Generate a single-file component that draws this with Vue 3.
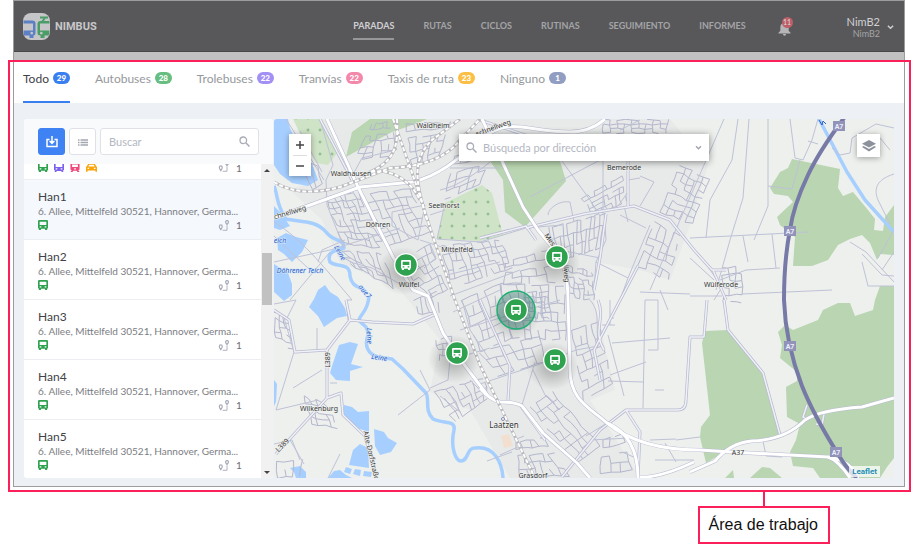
<script setup>
const nav = ['PARADAS', 'RUTAS', 'CICLOS', 'RUTINAS', 'SEGUIMIENTO', 'INFORMES']

const tabs = [
  { label: 'Todo', count: 29, tone: 'blue' },
  { label: 'Autobuses', count: 28, tone: 'green' },
  { label: 'Trolebuses', count: 22, tone: 'violet' },
  { label: 'Tranvías', count: 22, tone: 'pink' },
  { label: 'Taxis de ruta', count: 23, tone: 'amber' },
  { label: 'Ninguno', count: 1, tone: 'slate' },
]

const address = '6. Allee, Mittelfeld 30521, Hannover, Germa...'
const stops = [
  { id: 0, kinds: ['bus', 'trolley', 'tram', 'taxi'], routes: 1 },
  { id: 1, name: 'Han1', address, kinds: ['bus'], routes: 1, active: true },
  { id: 2, name: 'Han2', address, kinds: ['bus'], routes: 1 },
  { id: 3, name: 'Han3', address, kinds: ['bus'], routes: 1 },
  { id: 4, name: 'Han4', address, kinds: ['bus'], routes: 1 },
  { id: 5, name: 'Han5', address, kinds: ['bus'], routes: 1 },
]

const pins = [
  { x: 406, y: 265 },
  { x: 557, y: 257 },
  { x: 516, y: 310, selected: true },
  { x: 457, y: 353 },
  { x: 555, y: 360 },
]

// Street blocks: four corners of a district, then columns and rows.
const districts = [
  [325, 197, 358, 192, 385, 249, 343, 243, 7, 8],
  [363, 194, 410, 189, 430, 232, 388, 246, 6, 6],
  [372, 124, 390, 122, 398, 155, 354, 160, 5, 6],
  [406, 124, 450, 122, 438, 158, 412, 166, 5, 6],
  [455, 156, 492, 150, 480, 184, 444, 200, 5, 5],
  [441, 246, 500, 240, 512, 268, 452, 288, 10, 5],
  [398, 262, 430, 244, 447, 290, 430, 298, 5, 6],
  [337, 250, 382, 254, 394, 288, 350, 264, 7, 4],
  [462, 300, 500, 284, 512, 338, 480, 352, 5, 6],
  [500, 284, 564, 286, 566, 340, 512, 338, 8, 6],
  [480, 352, 540, 336, 544, 362, 498, 376, 6, 3],
  [548, 228, 605, 214, 600, 248, 556, 262, 12, 3],
  [506, 262, 548, 250, 556, 282, 504, 284, 6, 4],
  [568, 266, 592, 272, 594, 300, 570, 298, 5, 6],
  [582, 198, 622, 176, 626, 202, 594, 216, 7, 5],
  [603, 120, 668, 120, 666, 133, 603, 133, 9, 3],
  [680, 165, 709, 180, 692, 224, 660, 212, 5, 7],
  [654, 222, 680, 236, 668, 280, 638, 266, 4, 6],
  [572, 330, 598, 322, 612, 384, 584, 400, 4, 8],
  [434, 392, 484, 378, 488, 398, 455, 422, 8, 4],
  [436, 340, 452, 336, 452, 362, 440, 360, 3, 4],
  [530, 407, 552, 392, 600, 446, 577, 463, 4, 8],
  [516, 442, 544, 438, 570, 476, 520, 476, 6, 5],
  [603, 440, 622, 434, 632, 470, 600, 474, 3, 4],
  [304, 396, 326, 404, 338, 428, 312, 424, 4, 4],
  [274, 312, 288, 318, 294, 350, 276, 344, 3, 5],
  [722, 268, 742, 266, 742, 302, 724, 302, 3, 5],
  [414, 300, 436, 292, 440, 312, 418, 314, 4, 2],
  [276, 462, 302, 460, 300, 476, 278, 478, 3, 2],
  [297, 160, 318, 166, 322, 184, 312, 190, 2, 2],
  [524, 292, 548, 292, 550, 318, 526, 318, 6, 5],
]

function blockPath([ax, ay, bx, by, cx, cy, dx, dy, cols, rows], seed) {
  const at = (i, j) => {
    const u = i / cols
    const v = j / rows
    const sway = Math.sin(i * 2.1 + j * 1.7 + seed * 3) * 0.8
    const x = (ax * (1 - u) + bx * u) * (1 - v) + (dx * (1 - u) + cx * u) * v + sway
    const y = (ay * (1 - u) + by * u) * (1 - v) + (dy * (1 - u) + cy * u) * v - sway
    return x.toFixed(1) + ' ' + y.toFixed(1)
  }
  const dropped = (i, j, k) => (i * 7 + j * 13 + k * 5 + seed * 11 + i * j * 3) % 10 < 3
  let d = ''
  for (let i = 0; i <= cols; i++) {
    for (let j = 0; j <= rows; j++) {
      if (i < cols && !dropped(i, j, 0)) d += `M${at(i, j)}L${at(i + 1, j)}`
      if (j < rows && !dropped(i, j, 1)) d += `M${at(i, j)}L${at(i, j + 1)}`
    }
  }
  return d
}
const streets = districts.map(blockPath).join('')

const lanes = [
  'M320 119L333 165L326 180L327 205L344 248',
  'M274 222C300 238 320 262 352 300M274 262L330 250L400 228',
  'M290 300L330 252M274 236L310 270M318 262L322 250L345 240',
  'M350 262L372 268L400 284M352 300L346 300L348 320',
  'M274 304L296 300L286 320M284 318L294 352L276 410L318 400',
  'M317 328V350M293 388L322 370M330 383L337 383M398 415L430 390L420 370',
  'M449 392L460 412L440 396M430 388L448 380L450 360L490 348',
  'M290 440L304 464M328 478L340 454M300 460L292 440L274 444',
  'M437 239L480 242L526 228L562 225M445 203L437 239M420 240L445 248',
  'M447 275L500 262M450 296L520 270M453 312L500 290M460 330L560 300',
  'M480 384L540 364L576 350L598 346M535 362L522 405M533 370L545 395L560 410',
  'M548 215C548 208 560 200 570 202L574 222M530 197L566 178L600 160',
  'M562 161L590 200L600 216M603 161V212M628 161V192L618 206M640 176L654 182L640 206',
  'M628 180L640 178M604 213L606 240L596 262L594 290M596 262L628 278L650 225',
  'M624 206L628 222M620 215L646 228M628 278L620 300M560 250L600 258',
  'M590 300C600 312 596 320 598 346M608 335L624 396M612 343L670 338M608 381L644 382',
  'M645 300L643 408M645 300H658V350H648M655 390H664M610 375L646 362',
  'M610 300V325M610 318H614M602 325H615M640 292L690 294M660 290L668 310',
  'M724 119L680 220L650 290M738 119L732 160L710 200L706 238M749 119L743 198L730 240L716 290',
  'M768 119V206L754 240M768 186L792 189L800 160M790 119L795 158L803 160L812 140L818 119M808 141L818 144',
  'M690 238L770 234L808 232M743 236L748 262M772 234L776 268M720 280L746 270L780 268',
  'M690 258L714 280M690 296H722M742 294L832 290M706 264L720 284M714 300L724 284',
  'M894 174C875 180 874 190 878 200L890 224M832 148L840 155L850 153L852 138L876 124L894 128M880 138L890 150',
  'M862 254L882 275L894 276M850 242L866 252L894 282M882 270L894 252M862 262L868 286H894M894 230L878 258',
  'M676 440L700 437M650 440L676 439M665 443L676 462M655 460H694M763 441L766 456L782 457',
  'M622 452L636 458L640 478M590 440L630 438M586 436L612 420',
  'M500 455L520 446M487 461L512 452M514 440L524 436M620 130L640 120',
  'M480 140L498 150M300 131L322 172M286 119L324 180M450 168L500 168M350 180L362 158L396 150',
  'M440 190C460 186 480 170 490 162M430 215L445 210M392 212L425 205L418 240L392 226Z',
  'M430 244L436 258L424 268M462 300L470 330L490 360M470 380L486 396',
]

const minorRoads = [
  'M274 310L289 320L295 352L327 350L350 320L372 322L413 324L436 314',
  'M327 350V398L276 454M327 398L341 393L343 415L365 436L376 478',
  'M346 300L350 320M320 119L352 180',
  'M526 228L584 214L634 206L670 220L694 250L712 270L726 270M594 290L600 258L606 214M628 206V160',
  'M600 160L480 120M480 238L526 226L536 240',
  'M480 300L510 366L508 400M520 405L545 440',
  'M562 477L600 430L626 410L640 410L678 410Q686 410 686 400L690 337H704M626 410L640 432L638 477',
  'M707 300L704 337M724 300L728 330L763 373L780 435M713 270L726 300',
  'M598 300C606 320 592 330 604 350M638 266L594 350L600 380',
  'M807 405L803 417L808 420M824 414L822 425L816 424',
]

const roads = [
  'M274 218L360 187L413 182C440 175 457 160 487 135C510 118 530 132 570 132Q590 132 605 119',
  'M327 119L358 187L393 257L413 290L428 296L443 333L463 363L488 396M480 388Q490 400 500 402Q515 402 522 406L543 433L577 463L590 478',
  'M482 119L502 161L523 207L538 230L557 253Q568 270 568 300L570 370C570 400 590 408 607 423Q640 450 700 450L731 452L828 457Q850 460 858 478',
  'M690 472L715 461Q730 443 752 441Q785 440 805 420Q820 410 862 407L894 398',
  'M607 423Q638 436 638 478M640 477Q660 478 694 462M828 457Q838 460 850 478',
]

const rails = [
  'M393 119L417 187L433 237L455 300L480 365L535 478',
  'M274 182Q300 198 340 187L390 168Q440 166 460 140L480 119',
  'M397 119C398 140 398 160 370 172L382 171C405 175 415 190 420 200',
  'M427 220C415 180 412 160 432 140L460 119',
]

const river =
  'M274 186C278 195 276 205 286 219C300 222 316 220 326 232C333 242 344 238 344 248C336 250 326 252 330 262C338 268 350 262 350 276C352 288 360 286 366 292M369 296C368 312 360 314 359 320C362 326 368 324 368 335C364 346 368 354 378 357L392 359L403 369L426 393C430 400 424 410 433 419C444 424 456 420 454 430C450 448 456 461 461 461C469 461 466 447 476 448C494 446 502 462 503 478'

const lakes = [
  'M274 119H288L290 128L300 150L312 164L318 180L308 186L292 183L280 174L274 165Z',
  'M274 206L281 213L290 226L280 230L274 228Z',
  'M277 238L286 233L296 237L308 240L302 252L292 262L284 254L278 250Z',
  'M274 264L288 273L292 284L292 295L284 301L274 292Z',
  'M318 290L325 285L330 292L338 297L345 308L347 316L337 318L324 327L318 316L309 307L314 299Z',
  'M332 366L339 345L350 342L358 344L351 364L363 367L350 371L350 381L336 380L330 373Z',
  'M344 405L352 407L358 412L369 411V432L357 428L344 416Z',
  'M374 429L384 432L388 438L397 443L391 452L380 455L375 446Z',
  'M349 465L353 450L360 444L368 448L369 468Z',
  'M346 467L352 469L350 474L344 472ZM355 469L361 470L360 476L353 474ZM364 471L372 472L371 477L363 476Z',
  'M328 478L334 471L340 470L346 475L352 478Z',
  'M290 468L300 466L306 472V478H296L294 472Z',
  'M274 380L277 384L276 402L274 406Z',
]

const woods = [
  'M346 157L352 132L370 119H427L415 124L392 132L362 148Z',
  'M490 161L560 161L566 181L525 227L505 212L503 180Z',
  'M792 159L840 169L838 188L843 196L853 192L868 210L875 219L874 230L883 231L885 217L894 205V255L880 254L877 260L870 243L862 235L850 239L838 245L828 260L812 266L793 266L795 237L780 225L777 217L793 202L788 196L774 194L770 188L780 172L788 168Z',
  'M880 286H894V458L887 467L880 478H820L813 468L793 466L790 452L796 440L800 424L787 417L786 387L797 381V372L780 358L782 345L778 332L785 325L793 330L818 320L823 310L838 303L850 303L855 316L873 310L875 300Z',
  'M705 331L728 330L763 373L780 435L740 443L706 463L700 437L701 427L710 415L705 370L702 343Z',
  'M750 478L762 467L770 468L782 478ZM725 478L733 470L734 478Z',
]

const labels = [
  { t: 'Waldheim', x: 433, y: 128 },
  { t: 'Waldhausen', x: 351, y: 176 },
  { t: 'Seelhorst', x: 444, y: 208 },
  { t: 'Döhren', x: 378, y: 227 },
  { t: 'Mittelfeld', x: 457, y: 252 },
  { t: 'Wülfel', x: 409, y: 287 },
  { t: 'Bemerode', x: 624, y: 170 },
  { t: 'Wülferode', x: 721, y: 287 },
  { t: 'Wilkenburg', x: 319, y: 411 },
  { t: 'Grasdorf', x: 533, y: 478 },
  { t: 'A37', x: 738, y: 455 },
  { t: 'schnellweg', x: 289, y: 215, r: -17 },
  { t: 'schnellweg', x: 494, y: 130, r: -20 },
  { t: 'Mes', x: 548, y: 241, r: 55 },
  { t: 'llweg', x: 564, y: 274, r: 85 },
  { t: 'L389', x: 330, y: 360, r: -90 },
  { t: 'L389', x: 284, y: 447, r: -45 },
  { t: 'Alte Dorfstraße', x: 369, y: 456, r: 77 },
]

const waterLabels = [
  { t: 'Döhrener Teich', x: 300, y: 273 },
  { t: 'eich', x: 280, y: 243 },
  { t: 'Leine', x: 338, y: 254, r: 60 },
  { t: 'aue7', x: 363, y: 293, r: 50 },
  { t: 'Leine', x: 367, y: 336, r: 88 },
  { t: 'Leine', x: 379, y: 360, r: 8 },
]

const shields = [
  [839, 126],
  [790, 231],
  [790, 346],
  [836, 452],
]

const turn = (l) => `translate(${l.x} ${l.y}) rotate(${l.r || 0})`
</script>

<template>
  <div class="page">
    <svg class="sprite" aria-hidden="true">
      <symbol id="bus" viewBox="0 0 12 12">
        <path fill="currentColor" fill-rule="evenodd" d="M1.5 0h9Q12 0 12 1.500V9.500L11 10.500V12H8.500V10.500H3.500V12H1V10.500L0 9.500V1.500Q0 0 1.500 0ZM2 2V6H10V2ZM2 7.500V9H4V7.500ZM8 7.500V9H10V7.500Z" />
      </symbol>
      <symbol id="trolley" viewBox="0 0 12 12">
        <path fill="currentColor" fill-rule="evenodd" d="M1 0h10v1.500H12V9.500L10.500 10.500L11.500 12H9.500L8.500 10.800H3.500L2.500 12H.5L1.500 10.500L0 9.500V1.500H1ZM2 2.500V6H10V2.500ZM2 7.500V9H4V7.500ZM8 7.500V9H10V7.500Z" />
      </symbol>
      <symbol id="tram" viewBox="0 0 12 12">
        <path fill="currentColor" fill-rule="evenodd" d="M3 0H9L11.500 1.500V9L10 10L11.500 12H9L8 10.500H4L3 12H.5L2 10L.5 9V1.500ZM2.500 3V6H9.500V3ZM5 7.500V9H7V7.500Z" />
      </symbol>
      <symbol id="taxi" viewBox="0 0 14 12">
        <path fill="currentColor" fill-rule="evenodd" d="M5 0H9V1.500H11L13 5L14 6V12H12V10.500H2V12H0V6L1 5L3 1.500H5ZM4 3L3 5.500H11L10 3ZM2 7V8.500H4V7ZM10 7V8.500H12V7Z" />
      </symbol>
      <symbol id="chevron" viewBox="0 0 8 6">
        <path fill="none" stroke="currentColor" stroke-width="1.600" d="M1 1.500L4 4.500L7 1.500" />
      </symbol>
      <symbol id="lens" viewBox="0 0 12 12">
        <circle cx="4.700" cy="4.700" r="3.600" fill="none" stroke="currentColor" stroke-width="1.400" />
        <path stroke="currentColor" stroke-width="1.700" d="M7.400 7.400L11.400 11.400" />
      </symbol>
    </svg>

    <div class="stage">
      <div class="window">
        <header class="top">
          <div class="brand">
            <svg class="logo" viewBox="0 0 27 27" aria-hidden="true">
              <rect width="27" height="27" rx="8" fill="#c6c6c8" />
              <path fill="#5b80c4" fill-rule="evenodd" d="M0.500 7.500H9Q12.500 7.500 12.500 10V20Q12.500 22.500 10.500 22.500V25H6.500V22.500H1Q.5 21 .5 17.500H10V10.500H.5ZM8.700 18.700a1.400 1.400 0 1 0 .1 0Z" />
              <path fill="#4a9d66" fill-rule="evenodd" d="M17 3.500H25V5.500H22.500L21 8H26.500V10.500H17V17.500H26.500Q26.500 21 25.500 22.500H21.500V25H17.500V22.500Q14.500 22.500 14.500 20V11Q14.500 8 17.500 8H18.500L20.500 5.500H17ZM18.300 18.700a1.400 1.400 0 1 0 .1 0Z" />
            </svg>
            <span>NIMBUS</span>
          </div>
          <nav class="menu">
            <a v-for="(n, i) in nav" :key="n" href="#" :class="{ on: i === 0 }">{{ n }}</a>
          </nav>
          <button class="bell" aria-label="Notificaciones">
            <svg viewBox="0 0 14 16" aria-hidden="true">
              <path fill="currentColor" d="M7 0.500Q8 .5 8 1.800Q11.500 2.800 11.500 7V10.500L13.500 12.500V13.300H.5V12.500L2.500 10.500V7Q2.500 2.800 6 1.800Q6 .5 7 .5ZM5.200 14H8.800Q8.500 15.800 7 15.800T5.200 14Z" />
            </svg>
            <span class="alerts">11</span>
          </button>
          <button class="user">
            <span class="who"><b>NimB2</b><small>NimB2</small></span>
            <svg class="chev" aria-hidden="true"><use href="#chevron" /></svg>
          </button>
        </header>

        <div class="tabs" role="tablist">
          <button v-for="(t, i) in tabs" :key="t.label" role="tab" class="tab" :class="{ on: i === 0 }" :aria-selected="i === 0">
            {{ t.label }}<span class="badge" :class="t.tone">{{ t.count }}</span>
          </button>
        </div>

        <main class="work">
          <aside class="side">
            <div class="tools">
              <button class="tool primary" aria-label="Importar">
                <svg viewBox="0 0 12 12" aria-hidden="true">
                  <path fill="none" stroke="currentColor" stroke-width="1.500" d="M3.500 3.500H1V10.500H11V3.500H8.500M6 0V7M3.600 5L6 7.400L8.400 5" />
                </svg>
              </button>
              <button class="tool" aria-label="Lista">
                <svg viewBox="0 0 12 12" aria-hidden="true">
                  <path stroke="currentColor" stroke-width="1.400" d="M1 4H2.500M3.500 4H11M1 6.500H2.500M3.500 6.500H11M1 9H2.500M3.500 9H11" />
                </svg>
              </button>
              <label class="find">
                <input type="text" placeholder="Buscar" aria-label="Buscar" />
                <svg aria-hidden="true"><use href="#lens" /></svg>
              </label>
            </div>
            <div class="scroller">
              <ul class="list">
                <li v-for="s in stops" :key="s.id" class="stop" :class="{ active: s.active, cut: !s.name }">
                  <template v-if="s.name">
                    <h3>{{ s.name }}</h3>
                    <p>{{ s.address }}</p>
                  </template>
                  <div class="meta">
                    <svg v-for="k in s.kinds" :key="k" :class="['kind', k]" aria-hidden="true"><use :href="'#' + k" /></svg>
                    <svg class="route" viewBox="0 0 12 12" aria-hidden="true">
                      <g fill="none" stroke="currentColor" stroke-width="1.300">
                        <path d="M2.500 10.500C1.500 9 .9 8 .9 7A1.600 1.600 0 0 1 4.100 7C4.100 8 3.500 9 2.500 10.500Z" />
                        <path d="M9.300 5C8.300 3.800 7.700 3 7.700 2.200A1.600 1.600 0 0 1 10.900 2.200C10.900 3 10.300 3.800 9.300 5Z" />
                        <path d="M4.500 11.200H9.300V6" stroke-width="1" />
                      </g>
                    </svg>
                    <span class="num">{{ s.routes }}</span>
                  </div>
                </li>
              </ul>
              <div class="bar" aria-hidden="true">
                <i class="up"></i>
                <i class="thumb"></i>
                <i class="down"></i>
              </div>
            </div>
          </aside>

          <section class="map">
            <svg class="canvas" viewBox="274 119 620 359" preserveAspectRatio="xMidYMid slice" role="img" aria-label="Hannover">
              <defs>
                <pattern id="graves" width="12" height="12" patternUnits="userSpaceOnUse" patternTransform="translate(2 4)">
                  <rect width="12" height="12" fill="#cfe3c6" />
                  <path d="M4.500 6H7.500M6 4.500V7.500" stroke="#85b386" stroke-width="1" />
                </pattern>
                <radialGradient id="shade">
                  <stop offset="0.300" stop-color="#333" stop-opacity="0.250" />
                  <stop offset="1" stop-color="#333" stop-opacity="0" />
                </radialGradient>
              </defs>
              <rect x="274" y="119" width="620" height="359" fill="#edf0ed" />
              <path fill="#e7eae8" d="M318 119H670L708 165L690 225L670 280L640 270L596 262L594 300L615 390L590 400L610 430L640 478H510L470 410L430 392L440 340L400 290L340 262L322 220L290 190L318 180Z" />
              <path v-for="d in woods" :key="d" :d="d" fill="#b9d5b1" />
              <path fill="url(#graves)" d="M293 119H320L338 152L328 165L316 163L303 140ZM437 239L445 203L482 185L492 193L503 235L480 241Z" />
              <path fill="#f2dfcf" d="M501 436L509 434L513 446L504 448Z" />
              <path :d="river" class="river" />
              <path v-for="d in lakes" :key="d" :d="d" fill="#a6cfff" />
              <path d="M819 119L847 172L865 200L894 232" class="river" />
              <path :d="streets" class="street" />
              <path v-for="d in lanes" :key="d" :d="d" class="lane" />
              <path v-for="d in minorRoads" :key="d" :d="d" class="casing" />
              <path v-for="d in minorRoads" :key="'f' + d" :d="d" class="fill" />
              <path v-for="d in roads" :key="d" :d="d" class="casing big" />
              <path v-for="d in roads" :key="'f' + d" :d="d" class="fill big" />
              <path v-for="d in rails" :key="d" :d="d" class="rail" />
              <path v-for="d in rails" :key="'t' + d" :d="d" class="ties" />
              <path class="motorway" d="M844 118C826 142 816 158 808 175C798 196 792 215 790 230C785 255 784 277 784 300C785 330 792 360 802 386C814 416 828 438 838 454Q846 468 857 478" />
              <g v-for="s in shields" :key="s[1]">
                <rect :x="s[0] - 6" :y="s[1] - 5" width="12" height="10" fill="#9194b8" />
                <text :x="s[0]" :y="s[1] + 3" class="shield">A7</text>
              </g>
              <text v-for="l in labels" :key="l.t + l.x" :transform="turn(l)" class="label">{{ l.t }}</text>
              <text v-for="l in waterLabels" :key="l.t + l.y" :transform="turn(l)" class="label water">{{ l.t }}</text>
              <circle cx="503" cy="419" r="1.500" fill="#fff" stroke="#8587b5" />
              <text x="504" y="428" class="label town">Laatzen</text>
              <path d="M819 120L822 125L823 121L826 124" fill="none" stroke="#2a5cc4" />

              <g v-for="p in pins" :key="p.x" :transform="`translate(${p.x} ${p.y})`">
                <ellipse cx="-3" cy="6" rx="26" ry="24" fill="url(#shade)" />
                <circle v-if="p.selected" r="19" fill="#2d7d6b" fill-opacity="0.400" stroke="#1fae73" stroke-width="1.500" />
                <circle r="12" fill="#fff" />
                <circle r="10.700" fill="#2fa24f" />
                <use href="#bus" x="-5" y="-5" width="10" height="10" color="#fff" />
              </g>
            </svg>

            <div class="controls">
              <div class="zoom">
                <button aria-label="Acercar"><svg viewBox="0 0 10 10"><path d="M1 5H9M5 1V9" /></svg></button>
                <button aria-label="Alejar"><svg viewBox="0 0 10 10"><path d="M1 5H9" /></svg></button>
              </div>
              <label class="geo">
                <svg class="lens" aria-hidden="true"><use href="#lens" /></svg>
                <input type="text" placeholder="Búsqueda por dirección" aria-label="Búsqueda por dirección" />
                <svg class="down" aria-hidden="true"><use href="#chevron" /></svg>
              </label>
              <button class="layers" aria-label="Capas">
                <svg viewBox="0 0 14 12" aria-hidden="true">
                  <path fill="#8d919c" d="M7 0L14 3.800L7 7.600L0 3.800ZM1.600 6L7 9L12.400 6L14 7L7 11.500L0 7Z" />
                </svg>
              </button>
            </div>
            <a class="credit" href="#">Leaflet</a>
          </section>
        </main>
      </div>
      <div class="frame" aria-hidden="true"></div>
    </div>
    <div class="callout">Área de trabajo</div>
  </div>
</template>

<style>
body { background: #fff; }
</style>

<style scoped>
* { box-sizing: border-box; }
.page {
  padding: 0 9px 0 8px;
  display: flex;
  flex-direction: column;
  font-family: Lato, sans-serif;
  color: #3f4247;
}
button { border: 0; padding: 0; background: none; font: inherit; color: inherit; }
a { color: inherit; text-decoration: none; }
input { font: inherit; color: inherit; border: 0; outline: 0; background: none; padding: 0; min-width: 0; }
svg { display: block; flex: none; }
.sprite { position: absolute; width: 0; height: 0; }

.stage { position: relative; padding: 0 6px 5px 5px; }
.window { border: 1px solid #9c9c9e; background: #fff; }
.frame { position: absolute; inset: 60px 0 0; border: 2px solid #fb1f5a; pointer-events: none; }

.top {
  display: flex;
  align-items: center;
  height: 60px;
  padding: 0 10px 9px 9px;
  background: linear-gradient(#58585b 50px, #47474a 50px, #47474a 51px, #c1c1c1 51px);
  color: #a4a4a6;
}
.brand { display: flex; align-items: center; gap: 5px; font: 700 11px Roboto, sans-serif; color: #c8c8ca; }
.logo { width: 27px; height: 27px; }
.menu { display: flex; gap: 29px; margin-left: auto; font-size: 9px; font-weight: 700; }
.menu a { line-height: 24px; border-bottom: 2px solid transparent; }
.menu .on { color: #d0d0d2; border-color: #97979a; }
.bell { position: relative; margin-left: 32px; color: #b5b5b7; }
.bell svg { width: 13px; height: 15px; margin-top: 4px; }
.alerts {
  position: absolute; top: 0; left: 4px; width: 11px; height: 11px;
  border-radius: 50%; background: #bd5f68; color: #ddd; font-size: 7px; line-height: 11px; text-align: center;
}
.user { display: flex; align-items: center; gap: 7px; margin-left: 56px; }
.who { display: grid; justify-items: end; }
.who b { font-size: 11px; font-weight: 400; line-height: 13px; color: #d0d0d2; }
.who small { font-size: 9px; line-height: 11px; }
.chev { width: 7px; height: 6px; color: #d0d0d2; }

.tabs { display: flex; gap: 25px; height: 42px; padding: 0 9px; }
.tab {
  display: flex; align-items: center; gap: 4px; padding-bottom: 8px;
  border-top: 2px solid transparent;
  border-bottom: 2px solid transparent; font-size: 12px; color: #96989c;
}
.tab.on { color: #3f4247; border-bottom-color: #3a7ff0; }
.badge {
  min-width: 17px; height: 12px; border-radius: 6px; color: #fff;
  font-size: 8px; font-weight: 900; line-height: 12px; text-align: center;
}
.blue { background: #3a7ff0; }
.green { background: #68bd80; }
.violet { background: #a390f5; }
.pink { background: #f388aa; }
.amber { background: #fcbf45; }
.slate { background: #929dc2; }

.work { display: flex; gap: 1px; padding: 16px 10px 8px; background: #edf1f5; }
.side { flex: none; width: 249px; background: #fff; border-radius: 3px; overflow: hidden; }
.tools { display: flex; gap: 4px; padding: 9px 14px; background: #f9fafc; }
.tool {
  flex: none; width: 27px; height: 27px; display: grid; place-items: center;
  border: 1px solid #dfe1e7; border-radius: 3px; background: #fff; color: #a3a7b0;
}
.tool svg { width: 12px; height: 12px; }
.tool.primary { background: #3f82f3; border-color: #3f82f3; color: #fff; }
.find {
  flex: 1; min-width: 0; display: flex; align-items: center; height: 27px; padding: 0 8px;
  border: 1px solid #dfe1e7; border-radius: 3px; background: #fff; color: #a9acb6;
}
.find input { flex: 1; font-size: 11px; }
.find svg { width: 11px; height: 11px; }
input::placeholder { color: #b4b7c2; opacity: 1; }

.scroller { display: flex; }
.list { flex: 1; min-width: 0; margin: 0; padding: 0; list-style: none; }
.stop { height: 60px; padding: 10px 15px 0 14px; border-bottom: 1px solid #eceef1; }
.stop.cut { height: 16px; padding-top: 0; }
.stop.active { background: #f5f8fd; }
.stop:last-child { height: 58px; border-bottom: 0; }
.stop h3 { margin: 0; font-size: 12px; font-weight: 400; line-height: 14px; }
.stop p {
  margin: 0; font-size: 10px; line-height: 14px; color: #7b7d82;
  white-space: nowrap; overflow: hidden; text-overflow: ellipsis;
}
.meta { display: flex; align-items: center; gap: 6px; height: 14px; }
.cut .meta { height: 8px; align-items: flex-end; overflow: hidden; }
.kind { width: 10px; height: 10px; }
.cut .num { line-height: 8px; }
.bus { color: #2fa24f; }
.trolley { color: #7b61ee; }
.tram { color: #ee4a7d; }
.taxi { width: 11px; color: #fba50a; }
.route { width: 12px; height: 11px; margin-left: auto; color: #a9acb8; }
.num { width: 10px; font-size: 10px; color: #6d6f74; }
.bar {
  flex: none; width: 12px; display: flex; flex-direction: column; align-items: center;
  padding: 5px 1px 4px; background: #f1f1f1;
}
.up, .down { border: 3px solid transparent; }
i.up { border-top: 0; border-bottom-color: #444; }
i.down { border-bottom: 0; border-top-color: #444; margin-top: auto; }
.thumb { width: 10px; height: 52px; margin-top: 81px; background: #c1c1c1; }

.map { position: relative; flex: 1; min-width: 0; overflow: hidden; border-radius: 3px; }
.canvas { position: absolute; inset: 0; width: 100%; height: 100%; }
.canvas path { stroke-linejoin: round; }
.river { fill: none; stroke: #a6cfff; stroke-width: 3.500px; }
.street { fill: none; stroke: #b4b6cd; stroke-width: 1px; }
.lane { fill: none; stroke: #bfc1d6; stroke-width: 1px; }
.casing { fill: none; stroke: #b9bbd1; stroke-width: 3px; }
.casing.big { stroke-width: 4px; }
.fill { fill: none; stroke: #f0f1f6; stroke-width: 1.500px; }
.fill.big { stroke: #fff; stroke-width: 3px; }
.rail { fill: none; stroke: #b9b9be; stroke-width: 3px; }
.ties { fill: none; stroke: #fff; stroke-width: 2px; stroke-dasharray: 4 2; }
.motorway { fill: none; stroke: #777aa6; stroke-width: 4px; }
.shield { font: 700 7px Roboto, sans-serif; fill: #eef; text-anchor: middle; }
.label {
  font: 7px "Noto Sans", sans-serif; fill: #333; text-anchor: middle;
  stroke: #f2f4f2; stroke-width: 1px; paint-order: stroke;
}
.water { fill: #2a5cc4; font-style: italic; stroke: #d8e8fb; }
.town { font-size: 8px; }

.controls {
  position: absolute; inset: 15px 14px auto 15px;
  display: flex; align-items: flex-start; justify-content: space-between;
}
.zoom { display: grid; width: 22px; padding: 0 4px; background: #fff; box-shadow: 0 1px 6px rgba(0, 0, 0, 0.35); }
.zoom button { height: 21px; display: grid; place-items: center; }
.zoom button + button { border-top: 1px solid #ddd; }
.zoom svg { width: 10px; height: 10px; }
.zoom path { stroke: #444; stroke-width: 1.500px; }
.geo {
  display: flex; align-items: center; gap: 6px; width: 250px; height: 27px; padding: 0 7px;
  background: #fff; box-shadow: 0 1px 7px rgba(0, 0, 0, 0.45);
}
.geo input { flex: 1; font-size: 11px; }
.lens { width: 11px; height: 11px; color: #a9acb6; }
.geo .down { width: 7px; height: 5px; border: 0; color: #a0a3ac; }
.layers { width: 23px; height: 23px; display: grid; place-items: center; background: #fff; box-shadow: 0 1px 6px rgba(0, 0, 0, 0.35); }
.layers svg { width: 14px; height: 12px; }
.credit {
  position: absolute; right: 14px; bottom: 1px; padding: 0 3px;
  background: rgba(255, 255, 255, 0.75); font: 700 8px/11px Roboto, sans-serif; color: #1f8fb5;
}

.callout {
  position: relative; align-self: flex-end; margin: 14px 81px 0 0; padding: 8px 10px 8px 9px;
  border: 2px solid #fb1f5a; font: 16px/18px "Liberation Sans", sans-serif; color: #111;
}
.callout::before {
  content: ""; position: absolute; left: 50%; bottom: 100%; width: 2px; height: 16px; margin: 0 0 0 -1px; background: #fb1f5a;
}
</style>
